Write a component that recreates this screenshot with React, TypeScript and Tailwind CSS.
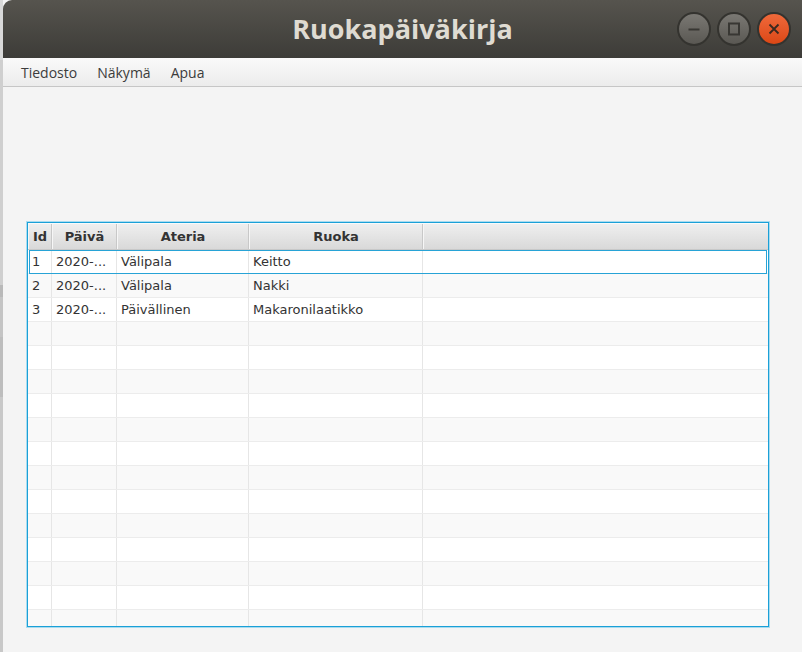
import React from 'react';

const cols = [
  { key: 'id', label: 'Id', w: 'w-[24px]' },
  { key: 'date', label: 'Päivä', w: 'w-[65px]' },
  { key: 'meal', label: 'Ateria', w: 'w-[132px]' },
  { key: 'food', label: 'Ruoka', w: 'w-[174px]' },
] as const;

const entries = [
  { id: '1', date: '2020-...', meal: 'Välipala', food: 'Keitto' },
  { id: '2', date: '2020-...', meal: 'Välipala', food: 'Nakki' },
  { id: '3', date: '2020-...', meal: 'Päivällinen', food: 'Makaronilaatikko' },
];

const emptyRows = 13;

function WindowButton({ kind }: { kind: 'min' | 'max' | 'close' }) {
  const isClose = kind === 'close';
  return (
    <div
      className={
        'w-[34px] h-[34px] rounded-full border-2 border-[#34332f] flex items-center justify-center ' +
        (isClose
          ? 'bg-gradient-to-b from-[#f0693a] to-[#dc4714]'
          : 'bg-gradient-to-b from-[#7a7873] to-[#5a5853]')
      }
    >
      <svg width="16" height="16" viewBox="0 0 16 16">
        {kind === 'min' && <line x1="2.5" y1="8.5" x2="13.5" y2="8.5" stroke="#383733" strokeWidth="2" />}
        {kind === 'max' && <rect x="3" y="2.5" width="10" height="11" fill="none" stroke="#383733" strokeWidth="2" />}
        {kind === 'close' && (
          <path d="M3.5 3.5 L12.5 12.5 M12.5 3.5 L3.5 12.5" stroke="#3a2a20" strokeWidth="1.8" />
        )}
      </svg>
    </div>
  );
}

function Row({ data, index, selected }: { data?: (typeof entries)[number]; index: number; selected?: boolean }) {
  const bg = index % 2 === 0 ? 'bg-white' : 'bg-[#f9f9f9]';
  return (
    <div className={'relative flex h-[24px] shrink-0 border-b border-[#ececec] ' + bg}>
      {cols.map((c) => (
        <div
          key={c.key}
          className={c.w + ' shrink-0 border-r border-[#e6e6e6] px-[4px] flex items-center text-[13px] text-[#333333] whitespace-nowrap overflow-hidden'}
        >
          {data ? data[c.key] : ''}
        </div>
      ))}
      <div className="flex-1" />
      {selected && <div className="absolute inset-x-[1px] top-0 bottom-[-1px] border border-[#27a3d6] pointer-events-none" />}
    </div>
  );
}

export default function App() {
  return (
    <div className="w-[802px] h-[652px] flex bg-[#f4f4f4] overflow-hidden" style={{ fontFamily: '"DejaVu Sans", sans-serif' }}>
      {/* background window peeking in */}
      <div className="w-[3px] flex flex-col bg-[#c9c9c9]">
        <div className="h-[60px] bg-[#d9d9d9]" />
        <div className="h-[225px] bg-[#cfcfcf]" />
        <div className="h-[12px] bg-[#b9b9b9]" />
        <div className="h-[40px] bg-[#c4c4c4]" />
        <div className="h-[60px] bg-[#bdbdbd]" />
        <div className="flex-1 bg-[#c8c8c8]" />
      </div>

      <div className="flex-1 flex flex-col">
        {/* Title bar */}
        <div className="h-[58px] shrink-0 rounded-tl-[9px] bg-gradient-to-b from-[#56544e] to-[#3d3c38] grid grid-cols-[1fr_auto_1fr] items-center">
          <div />
          <div className="text-[27px] font-bold text-[#dfdbd2] leading-none pb-[2px]" style={{ fontFamily: '"Open Sans", Lato, sans-serif' }}>
            Ruokapäiväkirja
          </div>
          <div className="flex justify-end items-center gap-[6px] pr-[11px]">
            <WindowButton kind="min" />
            <WindowButton kind="max" />
            <WindowButton kind="close" />
          </div>
        </div>

        {/* Menu bar */}
        <div
          className="h-[29px] shrink-0 flex items-center gap-[20px] pl-[18px] text-[14px] text-[#3c3c3c] bg-gradient-to-b from-[#fafafa] to-[#ececec] border-b border-[#c6c6c6]"
          style={{ fontFamily: '"Open Sans", Lato, sans-serif' }}
        >
          <span>Tiedosto</span>
          <span>Näkymä</span>
          <span>Apua</span>
        </div>

        {/* Content */}
        <div className="flex-1 pl-[24px] pt-[135px]">
          <div className="w-[742px] h-[405px] border border-[#1ba0d7] ring-1 ring-[#a9dcf0] bg-[#f9f9f9] flex flex-col overflow-hidden">
            {/* Header */}
            <div className="flex h-[27px] shrink-0 bg-gradient-to-b from-[#efefef] to-[#d9d9d9] border-b border-[#c8c8c8] border-t border-t-[#fafafa]">
              {cols.map((c) => (
                <div
                  key={c.key}
                  className={c.w + ' shrink-0 border-r border-[#c8c8c8] border-l border-l-[#f6f6f6] flex items-center justify-center text-[13px] font-bold text-[#333333]'}
                >
                  {c.label}
                </div>
              ))}
              <div className="flex-1 border-l border-l-[#f6f6f6]" />
            </div>
            {/* Body */}
            <div className="flex-1 flex flex-col overflow-hidden">
              {entries.map((e, i) => (
                <Row key={e.id} data={e} index={i} selected={i === 0} />
              ))}
              {Array.from({ length: emptyRows }, (_, i) => (
                <Row key={'empty-' + i} index={i + entries.length} />
              ))}
            </div>
          </div>
        </div>
      </div>
    </div>
  );
}
